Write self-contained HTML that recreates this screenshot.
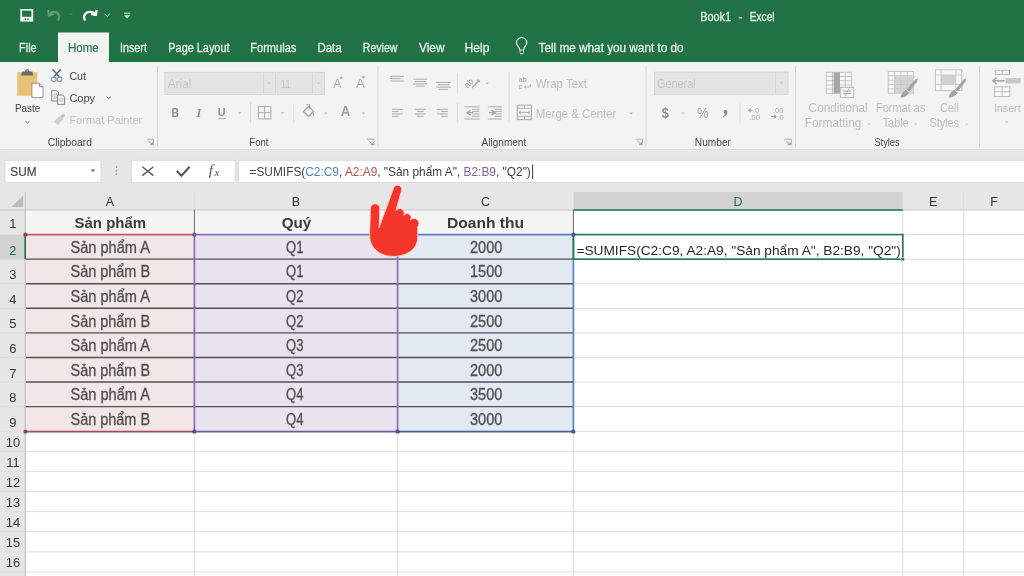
<!DOCTYPE html>
<html><head><meta charset="utf-8"><style>
html,body{margin:0;padding:0;width:1024px;height:576px;overflow:hidden;background:#fff;font-family:"Liberation Sans",sans-serif}
svg{display:block;will-change:transform}
</style></head><body>
<svg width="1024" height="576" viewBox="0 0 1024 576">
<rect x="0" y="0" width="1024" height="62" fill="#217346" />
<rect x="58" y="32.5" width="51" height="30" fill="#f3f3f3" />
<text x="700.20" y="21.10" font-size="12.79" textLength="30.81" lengthAdjust="spacingAndGlyphs" fill="#e4efe8" font-family="Liberation Sans" stroke="#e4efe8" stroke-width="0.3">Book1</text>
<rect x="738.6" y="17.3" width="3.5" height="1.1" fill="#e4efe8" />
<text x="749.80" y="21.10" font-size="12.79" textLength="24.70" lengthAdjust="spacingAndGlyphs" fill="#e4efe8" font-family="Liberation Sans" stroke="#e4efe8" stroke-width="0.3">Excel</text>
<text x="19.10" y="51.70" font-size="13.08" textLength="17.49" lengthAdjust="spacingAndGlyphs" fill="#e8f0ea" font-family="Liberation Sans" stroke="#e8f0ea" stroke-width="0.3">File</text>
<text x="119.90" y="51.70" font-size="13.08" textLength="27.01" lengthAdjust="spacingAndGlyphs" fill="#e8f0ea" font-family="Liberation Sans" stroke="#e8f0ea" stroke-width="0.3">Insert</text>
<text x="168.30" y="51.70" font-size="13.08" textLength="61.21" lengthAdjust="spacingAndGlyphs" fill="#e8f0ea" font-family="Liberation Sans" stroke="#e8f0ea" stroke-width="0.3">Page Layout</text>
<text x="250.30" y="51.70" font-size="13.08" textLength="46.00" lengthAdjust="spacingAndGlyphs" fill="#e8f0ea" font-family="Liberation Sans" stroke="#e8f0ea" stroke-width="0.3">Formulas</text>
<text x="317.40" y="51.70" font-size="13.08" textLength="24.30" lengthAdjust="spacingAndGlyphs" fill="#e8f0ea" font-family="Liberation Sans" stroke="#e8f0ea" stroke-width="0.3">Data</text>
<text x="362.80" y="51.70" font-size="13.08" textLength="34.56" lengthAdjust="spacingAndGlyphs" fill="#e8f0ea" font-family="Liberation Sans" stroke="#e8f0ea" stroke-width="0.3">Review</text>
<text x="419.00" y="51.70" font-size="13.08" textLength="25.46" lengthAdjust="spacingAndGlyphs" fill="#e8f0ea" font-family="Liberation Sans" stroke="#e8f0ea" stroke-width="0.3">View</text>
<text x="464.50" y="51.70" font-size="13.08" textLength="24.89" lengthAdjust="spacingAndGlyphs" fill="#e8f0ea" font-family="Liberation Sans" stroke="#e8f0ea" stroke-width="0.3">Help</text>
<text x="538.60" y="51.70" font-size="13.08" textLength="145.00" lengthAdjust="spacingAndGlyphs" fill="#e8f0ea" font-family="Liberation Sans" stroke="#e8f0ea" stroke-width="0.3">Tell me what you want to do</text>
<text x="68.00" y="51.70" font-size="13.08" textLength="30.70" lengthAdjust="spacingAndGlyphs" fill="#217346" font-family="Liberation Sans" stroke="#217346" stroke-width="0.2">Home</text>
<rect x="0" y="62" width="1024" height="87.5" fill="#f3f3f3" />
<rect x="0" y="149" width="1024" height="1.2" fill="#dadada" />
<rect x="0" y="150.2" width="1024" height="42" fill="#e6e6e6" />
<line x1="157.5" y1="66" x2="157.5" y2="147" stroke="#d4d4d4" stroke-width="1" />
<line x1="378" y1="66" x2="378" y2="147" stroke="#d4d4d4" stroke-width="1" />
<line x1="646" y1="66" x2="646" y2="147" stroke="#d4d4d4" stroke-width="1" />
<line x1="795.5" y1="66" x2="795.5" y2="147" stroke="#d4d4d4" stroke-width="1" />
<line x1="979.5" y1="66" x2="979.5" y2="147" stroke="#d4d4d4" stroke-width="1" />
<text x="47.70" y="145.50" font-size="11.05" textLength="44.30" lengthAdjust="spacingAndGlyphs" fill="#444444" font-family="Liberation Sans" >Clipboard</text>
<text x="249.30" y="145.50" font-size="11.05" textLength="19.11" lengthAdjust="spacingAndGlyphs" fill="#444444" font-family="Liberation Sans" >Font</text>
<text x="481.60" y="145.50" font-size="11.05" textLength="44.59" lengthAdjust="spacingAndGlyphs" fill="#444444" font-family="Liberation Sans" >Alignment</text>
<text x="694.80" y="145.50" font-size="11.05" textLength="36.19" lengthAdjust="spacingAndGlyphs" fill="#444444" font-family="Liberation Sans" >Number</text>
<text x="874.40" y="145.50" font-size="11.05" textLength="25.21" lengthAdjust="spacingAndGlyphs" fill="#444444" font-family="Liberation Sans" >Styles</text>
<rect x="17.2" y="72.3" width="20" height="23.4" fill="#e9c176" />
<path d="M21 75.5 L22 71.5 L25 71.5 A2.2 2.2 0 0 1 29.4 71.5 L32.3 71.5 L33.3 75.5 Z" fill="#6b6b6b" stroke="none" stroke-width="1" />
<rect x="26.6" y="70.3" width="1.2" height="1.2" fill="#e9c176" />
<path d="M31.9 83.2 L39.5 83.2 L43 86.7 L43 97.6 L31.9 97.6 Z" fill="#ffffff" stroke="#8a8a8a" stroke-width="0.9" />
<path d="M39.5 83.2 L39.5 86.7 L43 86.7" fill="#d0d0d0" stroke="#8a8a8a" stroke-width="0.9" />
<text x="15.00" y="111.80" font-size="10.76" textLength="25.20" lengthAdjust="spacingAndGlyphs" fill="#444444" font-family="Liberation Sans" >Paste</text>
<path d="M25.6 121.3 L27.5 123 L29.4 121.3" fill="none" stroke="#666" stroke-width="1" />
<path d="M52.5 69.3 L60 77.5 M60.8 69.3 L53.3 77.5" fill="none" stroke="#606060" stroke-width="1.3" />
<circle cx="53.8" cy="79.3" r="2.3" fill="none" stroke="#8aa2ba" stroke-width="1.3"/>
<circle cx="59.6" cy="79.3" r="2.3" fill="none" stroke="#8aa2ba" stroke-width="1.3"/>
<text x="69.40" y="80.00" font-size="11.48" textLength="16.51" lengthAdjust="spacingAndGlyphs" fill="#444444" font-family="Liberation Sans" >Cut</text>
<path d="M51.6 90.6 L56.5 90.6 L58.5 92.6 L58.5 101 L51.6 101 Z" fill="#f7f7f7" stroke="#777" stroke-width="0.9" />
<path d="M53 94 L57 94 M53 96 L57 96 M53 98 L57 98" fill="none" stroke="#999" stroke-width="0.7" />
<path d="M57.5 95 L62.5 95 L64.6 97.1 L64.6 104.3 L57.5 104.3 Z" fill="#f7f7f7" stroke="#777" stroke-width="0.9" />
<path d="M58.8 99 L63.3 99 M58.8 101 L63.3 101" fill="none" stroke="#8aa2ba" stroke-width="0.8" />
<text x="69.40" y="101.60" font-size="11.48" textLength="25.69" lengthAdjust="spacingAndGlyphs" fill="#444444" font-family="Liberation Sans" >Copy</text>
<path d="M106.8 96.8 L108.8 98.6 L110.8 96.8" fill="none" stroke="#666" stroke-width="0.9" />
<path d="M54 121.5 L60 115.5 L63.5 119 L57.5 125 Z" fill="#cfcfcf" stroke="none" stroke-width="1" />
<path d="M60.5 116 L63.5 113.8 L65 115.3 L62.8 118.3 Z" fill="#bdbdbd" stroke="none" stroke-width="1" />
<text x="69.40" y="124.20" font-size="11.48" textLength="72.91" lengthAdjust="spacingAndGlyphs" fill="#c2c2c2" font-family="Liberation Sans" >Format Painter</text>
<path d="M146.5 139.2 L153.5 139.2 L153.5 145.2" fill="none" stroke="#a0a0a0" stroke-width="0.8" />
<path d="M148.5 141.2 L152.5 144.7 M152.5 142.2 L152.5 144.7 L150.0 144.7" fill="none" stroke="#8a8a8a" stroke-width="0.8" />
<path d="M367 139.2 L374 139.2 L374 145.2" fill="none" stroke="#a0a0a0" stroke-width="0.8" />
<path d="M369 141.2 L373 144.7 M373 142.2 L373 144.7 L370.5 144.7" fill="none" stroke="#8a8a8a" stroke-width="0.8" />
<path d="M635.5 139.2 L642.5 139.2 L642.5 145.2" fill="none" stroke="#a0a0a0" stroke-width="0.8" />
<path d="M637.5 141.2 L641.5 144.7 M641.5 142.2 L641.5 144.7 L639.0 144.7" fill="none" stroke="#8a8a8a" stroke-width="0.8" />
<path d="M784.3 139.2 L791.3 139.2 L791.3 145.2" fill="none" stroke="#a0a0a0" stroke-width="0.8" />
<path d="M786.3 141.2 L790.3 144.7 M790.3 142.2 L790.3 144.7 L787.8 144.7" fill="none" stroke="#8a8a8a" stroke-width="0.8" />
<rect x="164.9" y="72.3" width="110.5" height="22.2" fill="#e4e4e4" stroke="#d2d2d2" stroke-width="0.8"/>
<line x1="263.5" y1="72.5" x2="263.5" y2="94.3" stroke="#d2d2d2" stroke-width="0.8" />
<rect x="276.9" y="72.3" width="47.7" height="22.2" fill="#e4e4e4" stroke="#d2d2d2" stroke-width="0.8"/>
<line x1="312.5" y1="72.5" x2="312.5" y2="94.3" stroke="#d2d2d2" stroke-width="0.8" />
<path d="M267.8 82.8 L269.8 82.8 L268.8 84 Z" fill="#aaa" stroke="none" stroke-width="1" />
<path d="M317.3 82.8 L319.3 82.8 L318.3 84 Z" fill="#aaa" stroke="none" stroke-width="1" />
<text x="167.80" y="87.60" font-size="12.06" textLength="23.51" lengthAdjust="spacingAndGlyphs" fill="#c4c4c4" font-family="Liberation Sans" >Arial</text>
<text x="280.50" y="87.70" font-size="11.63" textLength="10.41" lengthAdjust="spacingAndGlyphs" fill="#c4c4c4" font-family="Liberation Sans" >11</text>
<text x="333.20" y="87.70" font-size="12.35" textLength="8.19" lengthAdjust="spacingAndGlyphs" fill="#a9a9a9" font-family="Liberation Sans" >A</text>
<path d="M339.2 78.4 L343.4 78.4 L341.3 76.2 Z" fill="#a0a0a0" stroke="none" stroke-width="1" />
<text x="356.00" y="87.70" font-size="12.35" textLength="8.89" lengthAdjust="spacingAndGlyphs" fill="#a9a9a9" font-family="Liberation Sans" >A</text>
<path d="M361.2 76.2 L365.4 76.2 L363.3 78.4 Z" fill="#a0a0a0" stroke="none" stroke-width="1" />
<text x="171.50" y="117.00" font-size="12.21" textLength="7.50" lengthAdjust="spacingAndGlyphs" fill="#8e8e8e" font-family="Liberation Sans" font-weight="bold" >B</text>
<text x="196.5" y="117" font-size="12.4" font-weight="bold" font-style="italic" fill="#8e8e8e" font-family="Liberation Serif">I</text>
<text x="217.80" y="116.40" font-size="11.63" textLength="7.80" lengthAdjust="spacingAndGlyphs" fill="#8e8e8e" font-family="Liberation Sans" font-weight="bold" >U</text>
<line x1="217.8" y1="118.6" x2="225.6" y2="118.6" stroke="#a8a8a8" stroke-width="0.9" />
<path d="M237.70000000000002 112.2 L241.3 112.2 L239.5 114.2 Z" fill="#b5b5b5" stroke="none" stroke-width="1" />
<line x1="250.6" y1="102" x2="250.6" y2="123" stroke="#d8d8d8" stroke-width="0.9" />
<rect x="258.4" y="106.5" width="12.4" height="12.4" fill="none" stroke="#b0b0b0" stroke-width="1.1"/>
<line x1="264.6" y1="106.5" x2="264.6" y2="118.9" stroke="#b0b0b0" stroke-width="1.1" />
<line x1="258.4" y1="112.7" x2="270.8" y2="112.7" stroke="#b0b0b0" stroke-width="1.1" />
<path d="M280.9 112.2 L284.5 112.2 L282.7 114.2 Z" fill="#b5b5b5" stroke="none" stroke-width="1" />
<line x1="293.8" y1="104" x2="293.8" y2="123" stroke="#d8d8d8" stroke-width="0.9" />
<path d="M303.5 111.5 L308.5 106.5 L313.5 111.5 L308.5 116.5 Z" fill="none" stroke="#a5a5a5" stroke-width="1.3" />
<path d="M306.5 104.8 L309.5 104.8 L309.5 108.5" fill="none" stroke="#a5a5a5" stroke-width="1.1" />
<path d="M313 112 Q315 114.5 314 116 Q312.5 115 313 112 Z" fill="#a5a5a5" stroke="none" stroke-width="1" />
<path d="M324.09999999999997 112.4 L327.7 112.4 L325.9 114.4 Z" fill="#b5b5b5" stroke="none" stroke-width="1" />
<text x="340.80" y="116.20" font-size="15.41" textLength="9.50" lengthAdjust="spacingAndGlyphs" fill="#a0a0a0" font-family="Liberation Sans" font-weight="bold" >A</text>
<path d="M361.7 112.4 L365.3 112.4 L363.5 114.4 Z" fill="#b5b5b5" stroke="none" stroke-width="1" />
<line x1="390.4" y1="76.3" x2="404.0" y2="76.3" stroke="#acacac" stroke-width="1.0" />
<line x1="390.4" y1="78.6" x2="400.4" y2="78.6" stroke="#acacac" stroke-width="1.0" />
<line x1="390.4" y1="81" x2="404.0" y2="81" stroke="#acacac" stroke-width="1.0" />
<line x1="413.3" y1="79.2" x2="427.3" y2="79.2" stroke="#acacac" stroke-width="1.0" />
<line x1="414.8" y1="81.6" x2="425.8" y2="81.6" stroke="#acacac" stroke-width="1.0" />
<line x1="413.3" y1="83.9" x2="427.3" y2="83.9" stroke="#acacac" stroke-width="1.0" />
<line x1="415.8" y1="86.2" x2="424.8" y2="86.2" stroke="#acacac" stroke-width="1.0" />
<line x1="436.2" y1="82.4" x2="450.8" y2="82.4" stroke="#acacac" stroke-width="1.0" />
<line x1="438.0" y1="84.7" x2="449.0" y2="84.7" stroke="#acacac" stroke-width="1.0" />
<line x1="436.2" y1="87.1" x2="450.8" y2="87.1" stroke="#acacac" stroke-width="1.0" />
<line x1="439.0" y1="89.4" x2="448.0" y2="89.4" stroke="#acacac" stroke-width="1.0" />
<line x1="457.4" y1="73" x2="457.4" y2="93" stroke="#d8d8d8" stroke-width="0.9" />
<text x="0" y="0" font-size="8.5" fill="#a0a0a0" font-family="Liberation Sans" transform="translate(467.5 88.5) rotate(-45)">ab</text>
<line x1="472" y1="88" x2="479" y2="80.5" stroke="#a0a0a0" stroke-width="1.1" />
<path d="M477 80.2 L479.2 80.2 L479.2 82.4" fill="none" stroke="#a0a0a0" stroke-width="1" />
<path d="M485.2 82.6 L488.8 82.6 L487.0 84.6 Z" fill="#b5b5b5" stroke="none" stroke-width="1" />
<line x1="392" y1="109.3" x2="402.8" y2="109.3" stroke="#acacac" stroke-width="1.0" />
<line x1="392" y1="111.6" x2="398.5" y2="111.6" stroke="#acacac" stroke-width="1.0" />
<line x1="392" y1="113.9" x2="402.8" y2="113.9" stroke="#acacac" stroke-width="1.0" />
<line x1="392" y1="116.3" x2="398.5" y2="116.3" stroke="#acacac" stroke-width="1.0" />
<line x1="414.8" y1="109.3" x2="425.8" y2="109.3" stroke="#acacac" stroke-width="1.0" />
<line x1="417.05" y1="111.6" x2="423.55" y2="111.6" stroke="#acacac" stroke-width="1.0" />
<line x1="414.8" y1="113.9" x2="425.8" y2="113.9" stroke="#acacac" stroke-width="1.0" />
<line x1="417.05" y1="116.3" x2="423.55" y2="116.3" stroke="#acacac" stroke-width="1.0" />
<line x1="436.8" y1="109.3" x2="447.8" y2="109.3" stroke="#acacac" stroke-width="1.0" />
<line x1="441.3" y1="111.6" x2="447.8" y2="111.6" stroke="#acacac" stroke-width="1.0" />
<line x1="436.8" y1="113.9" x2="447.8" y2="113.9" stroke="#acacac" stroke-width="1.0" />
<line x1="441.3" y1="116.3" x2="447.8" y2="116.3" stroke="#acacac" stroke-width="1.0" />
<line x1="457.4" y1="103" x2="457.4" y2="123" stroke="#d8d8d8" stroke-width="0.9" />
<line x1="464.5" y1="106.8" x2="479.5" y2="106.8" stroke="#acacac" stroke-width="1.0" />
<line x1="464.5" y1="119" x2="479.5" y2="119" stroke="#acacac" stroke-width="1.0" />
<line x1="472.0" y1="109.3" x2="479.5" y2="109.3" stroke="#acacac" stroke-width="1.0" />
<line x1="472.0" y1="111.6" x2="479.5" y2="111.6" stroke="#acacac" stroke-width="1.0" />
<line x1="472.0" y1="113.9" x2="479.5" y2="113.9" stroke="#acacac" stroke-width="1.0" />
<line x1="472.0" y1="116.3" x2="479.5" y2="116.3" stroke="#acacac" stroke-width="1.0" />
<path d="M470.5 110.3 L467 112.7 L470.5 115.1" fill="none" stroke="#a0a0a0" stroke-width="1.3" />
<line x1="467" y1="112.7" x2="473" y2="112.7" stroke="#a0a0a0" stroke-width="1.2" />
<line x1="487.8" y1="106.8" x2="501.8" y2="106.8" stroke="#acacac" stroke-width="1.0" />
<line x1="487.8" y1="119" x2="501.8" y2="119" stroke="#acacac" stroke-width="1.0" />
<line x1="494.8" y1="109.3" x2="501.8" y2="109.3" stroke="#acacac" stroke-width="1.0" />
<line x1="494.8" y1="111.6" x2="501.8" y2="111.6" stroke="#acacac" stroke-width="1.0" />
<line x1="494.8" y1="113.9" x2="501.8" y2="113.9" stroke="#acacac" stroke-width="1.0" />
<line x1="494.8" y1="116.3" x2="501.8" y2="116.3" stroke="#acacac" stroke-width="1.0" />
<path d="M491.5 110.3 L495 112.7 L491.5 115.1" fill="none" stroke="#a0a0a0" stroke-width="1.3" />
<line x1="489" y1="112.7" x2="495" y2="112.7" stroke="#a0a0a0" stroke-width="1.2" />
<line x1="509" y1="72" x2="509" y2="123" stroke="#d8d8d8" stroke-width="0.9" />
<text x="518.8" y="82.4" font-size="7" fill="#a0a0a0" font-family="Liberation Sans">ab</text>
<text x="518.8" y="88.6" font-size="7" fill="#a0a0a0" font-family="Liberation Sans">c</text>
<path d="M530.3 84 L530.3 87 L524.5 87 M526 85.6 L524.5 87 L526 88.4" fill="none" stroke="#a8a8a8" stroke-width="0.8" />
<text x="535.75" y="88.00" font-size="12.50" textLength="51.25" lengthAdjust="spacingAndGlyphs" fill="#bdbdbd" font-family="Liberation Sans" >Wrap Text</text>
<rect x="517.3" y="105.2" width="14.2" height="14.4" fill="none" stroke="#a8a8a8" stroke-width="1"/>
<line x1="517.3" y1="108.4" x2="531.5" y2="108.4" stroke="#a8a8a8" stroke-width="0.8" />
<line x1="517.3" y1="116.4" x2="531.5" y2="116.4" stroke="#a8a8a8" stroke-width="0.8" />
<line x1="524.4" y1="105.2" x2="524.4" y2="108.4" stroke="#a8a8a8" stroke-width="0.8" />
<line x1="524.4" y1="116.4" x2="524.4" y2="119.6" stroke="#a8a8a8" stroke-width="0.8" />
<path d="M519 112.4 L530 112.4 M520.8 110.9 L519 112.4 L520.8 113.9 M528.2 110.9 L530 112.4 L528.2 113.9" fill="none" stroke="#a0a0a0" stroke-width="0.8" />
<text x="535.75" y="118.00" font-size="12.50" textLength="80.64" lengthAdjust="spacingAndGlyphs" fill="#bdbdbd" font-family="Liberation Sans" >Merge &amp; Center</text>
<path d="M629.3 112.6 L632.9 112.6 L631.1 114.6 Z" fill="#b5b5b5" stroke="none" stroke-width="1" />
<rect x="654.4" y="72.2" width="133.6" height="22.4" fill="#e4e4e4" stroke="#d2d2d2" stroke-width="0.8"/>
<line x1="775.5" y1="72.4" x2="775.5" y2="94.4" stroke="#d2d2d2" stroke-width="0.8" />
<path d="M780.5 82.4 L782.5 82.4 L781.5 83.6 Z" fill="#aaa" stroke="none" stroke-width="1" />
<text x="657.00" y="87.80" font-size="12.79" textLength="38.70" lengthAdjust="spacingAndGlyphs" fill="#c6c6c6" font-family="Liberation Sans" >General</text>
<text x="661.70" y="117.60" font-size="14.54" textLength="7.06" lengthAdjust="spacingAndGlyphs" fill="#8e8e8e" font-family="Liberation Sans" font-weight="bold" >$</text>
<path d="M681.1999999999999 112.6 L684.8 112.6 L683.0 114.6 Z" fill="#c0c0c0" stroke="none" stroke-width="1" />
<text x="696.90" y="117.80" font-size="14.97" textLength="11.69" lengthAdjust="spacingAndGlyphs" fill="#a6a6a6" font-family="Liberation Sans" >%</text>
<path d="M724.8 109.8 A2.3 2.3 0 0 1 727.4 112.6 Q727 115.6 723.2 117.4 L722.9 116.5 Q725 115.2 725 113.9 A2.2 2.2 0 0 1 724.8 109.8 Z" fill="#8e8e8e" stroke="none" stroke-width="1" />
<line x1="740" y1="103.5" x2="740" y2="123.5" stroke="#d8d8d8" stroke-width="0.9" />
<text x="753" y="113" font-size="7.6" fill="#a8a8a8" font-family="Liberation Sans">.0</text>
<text x="749.5" y="119.6" font-size="7.6" fill="#a8a8a8" font-family="Liberation Sans">.00</text>
<path d="M752.5 110.3 L749 110.3 M750.6 108.6 L748.8 110.3 L750.6 112" fill="none" stroke="#a0a0a0" stroke-width="1.1" />
<text x="773" y="112.6" font-size="7.6" fill="#a8a8a8" font-family="Liberation Sans">.00</text>
<text x="777.5" y="119.6" font-size="7.6" fill="#a8a8a8" font-family="Liberation Sans">.0</text>
<path d="M771 116.5 L776 116.5 M774.3 114.8 L776.1 116.5 L774.3 118.2" fill="none" stroke="#a0a0a0" stroke-width="1.1" />
<rect x="826.2" y="72.3" width="25.4" height="21" fill="#f7f7f7" stroke="#bdbdbd" stroke-width="0.9"/>
<line x1="832.5500000000001" y1="72.3" x2="832.5500000000001" y2="93.3" stroke="#bdbdbd" stroke-width="0.8" />
<line x1="838.9000000000001" y1="72.3" x2="838.9000000000001" y2="93.3" stroke="#bdbdbd" stroke-width="0.8" />
<line x1="845.25" y1="72.3" x2="845.25" y2="93.3" stroke="#bdbdbd" stroke-width="0.8" />
<line x1="826.2" y1="76.5" x2="851.6" y2="76.5" stroke="#bdbdbd" stroke-width="0.8" />
<line x1="826.2" y1="80.7" x2="851.6" y2="80.7" stroke="#bdbdbd" stroke-width="0.8" />
<line x1="826.2" y1="84.89999999999999" x2="851.6" y2="84.89999999999999" stroke="#bdbdbd" stroke-width="0.8" />
<line x1="826.2" y1="89.1" x2="851.6" y2="89.1" stroke="#bdbdbd" stroke-width="0.8" />
<rect x="833.6" y="72.3" width="6.4" height="21" fill="#a8a8a8" />
<rect x="840.3" y="87.3" width="13.4" height="10.2" fill="#f7f7f7" stroke="#b0b0b0" stroke-width="0.9"/>
<path d="M843 91 L851 91 M843 93.6 L851 93.6 M849 88.5 L845 96" fill="none" stroke="#9a9a9a" stroke-width="0.8" />
<rect x="888.2" y="71.4" width="25.4" height="21.8" fill="#f7f7f7" stroke="#bdbdbd" stroke-width="0.9"/>
<line x1="894.5500000000001" y1="71.4" x2="894.5500000000001" y2="93.2" stroke="#bdbdbd" stroke-width="0.8" />
<line x1="900.9000000000001" y1="71.4" x2="900.9000000000001" y2="93.2" stroke="#bdbdbd" stroke-width="0.8" />
<line x1="907.25" y1="71.4" x2="907.25" y2="93.2" stroke="#bdbdbd" stroke-width="0.8" />
<line x1="888.2" y1="75.76" x2="913.6" y2="75.76" stroke="#bdbdbd" stroke-width="0.8" />
<line x1="888.2" y1="80.12" x2="913.6" y2="80.12" stroke="#bdbdbd" stroke-width="0.8" />
<line x1="888.2" y1="84.48" x2="913.6" y2="84.48" stroke="#bdbdbd" stroke-width="0.8" />
<line x1="888.2" y1="88.84" x2="913.6" y2="88.84" stroke="#bdbdbd" stroke-width="0.8" />
<rect x="894.6" y="75.8" width="18.9" height="17.4" fill="#d6d6d6" />
<line x1="894.5500000000001" y1="75.8" x2="894.5500000000001" y2="93.2" stroke="#c4c4c4" stroke-width="0.7" />
<line x1="900.9000000000001" y1="75.8" x2="900.9000000000001" y2="93.2" stroke="#c4c4c4" stroke-width="0.7" />
<line x1="907.25" y1="75.8" x2="907.25" y2="93.2" stroke="#c4c4c4" stroke-width="0.7" />
<line x1="894.6" y1="80.12" x2="913.6" y2="80.12" stroke="#c4c4c4" stroke-width="0.7" />
<line x1="894.6" y1="84.48" x2="913.6" y2="84.48" stroke="#c4c4c4" stroke-width="0.7" />
<line x1="894.6" y1="88.84" x2="913.6" y2="88.84" stroke="#c4c4c4" stroke-width="0.7" />
<path d="M917.6 78.2 L915.2 79.4 L906.6 89.7 L909.3000000000001 91.8 L917.2 81.4 Z" fill="#a4a4a4" stroke="none" stroke-width="1" />
<path d="M905.8000000000001 89.4 L909.6 92.60000000000001 Q907.1 97.5 900.1 98.0 Q900.6 92.2 905.8000000000001 89.4 Z" fill="#a4a4a4" stroke="#f3f3f3" stroke-width="0.6" />
<rect x="935.4" y="69.8" width="26.4" height="20.8" fill="#f7f7f7" stroke="#bdbdbd" stroke-width="0.9"/>
<line x1="941" y1="69.8" x2="941" y2="90.6" stroke="#c4c4c4" stroke-width="0.8" />
<line x1="955.8" y1="69.8" x2="955.8" y2="90.6" stroke="#c4c4c4" stroke-width="0.8" />
<line x1="935.4" y1="75" x2="961.8" y2="75" stroke="#c4c4c4" stroke-width="0.8" />
<line x1="935.4" y1="84.4" x2="961.8" y2="84.4" stroke="#c4c4c4" stroke-width="0.8" />
<rect x="941" y="75" width="14.8" height="9.4" fill="#d0d0d0" />
<path d="M966 78.2 L963.6 79.4 L955 89.7 L957.7 91.8 L965.6 81.4 Z" fill="#a4a4a4" stroke="none" stroke-width="1" />
<path d="M954.2 89.4 L958 92.60000000000001 Q955.5 97.5 948.5 98.0 Q949 92.2 954.2 89.4 Z" fill="#a4a4a4" stroke="#f3f3f3" stroke-width="0.6" />
<text x="808.60" y="112.00" font-size="12.50" textLength="59.11" lengthAdjust="spacingAndGlyphs" fill="#bdbdbd" font-family="Liberation Sans" >Conditional</text>
<text x="804.80" y="127.40" font-size="12.50" textLength="56.59" lengthAdjust="spacingAndGlyphs" fill="#bdbdbd" font-family="Liberation Sans" >Formatting</text>
<path d="M867.0 123.6 L870.6 123.6 L868.8000000000001 125.6 Z" fill="#c8c8c8" stroke="none" stroke-width="1" />
<text x="876.00" y="112.00" font-size="12.50" textLength="49.41" lengthAdjust="spacingAndGlyphs" fill="#bdbdbd" font-family="Liberation Sans" >Format as</text>
<text x="882.70" y="127.40" font-size="12.50" textLength="25.91" lengthAdjust="spacingAndGlyphs" fill="#bdbdbd" font-family="Liberation Sans" >Table</text>
<path d="M914.0 123.6 L917.6 123.6 L915.8000000000001 125.6 Z" fill="#c8c8c8" stroke="none" stroke-width="1" />
<text x="940.00" y="112.00" font-size="12.50" textLength="19.00" lengthAdjust="spacingAndGlyphs" fill="#bdbdbd" font-family="Liberation Sans" >Cell</text>
<text x="929.40" y="127.40" font-size="12.50" textLength="29.61" lengthAdjust="spacingAndGlyphs" fill="#bdbdbd" font-family="Liberation Sans" >Styles</text>
<path d="M965.0 123.6 L968.6 123.6 L966.8000000000001 125.6 Z" fill="#c8c8c8" stroke="none" stroke-width="1" />
<rect x="995.2" y="70.4" width="14.3" height="4" fill="none" stroke="#b5b5b5" stroke-width="0.9"/>
<line x1="1002.3" y1="70.4" x2="1002.3" y2="74.4" stroke="#b5b5b5" stroke-width="0.8" />
<rect x="1005.6" y="78.2" width="15" height="5.2" fill="#c6c6c6" />
<line x1="992.8" y1="80.8" x2="1004.5" y2="80.8" stroke="#a8a8a8" stroke-width="1.6" />
<path d="M996.5 77.5 L993 80.8 L996.5 84.1" fill="none" stroke="#a8a8a8" stroke-width="1.6" />
<rect x="994.6" y="86.8" width="15.2" height="9.8" fill="#f7f7f7" stroke="#b5b5b5" stroke-width="0.9"/>
<line x1="1002.2" y1="86.8" x2="1002.2" y2="96.6" stroke="#b5b5b5" stroke-width="0.8" />
<line x1="994.6" y1="91.7" x2="1009.8000000000001" y2="91.7" stroke="#b5b5b5" stroke-width="0.8" />
<text x="993.90" y="112.10" font-size="11.48" textLength="26.71" lengthAdjust="spacingAndGlyphs" fill="#bdbdbd" font-family="Liberation Sans" >Insert</text>
<path d="M1004.8 121.4 L1008.4 121.4 L1006.6 123.4 Z" fill="#c8c8c8" stroke="none" stroke-width="1" />
<rect x="20.3" y="9" width="12.9" height="12.6" fill="#f4f8f5" />
<rect x="22.1" y="10.6" width="9.3" height="6.2" fill="#217346" />
<rect x="24.6" y="18.6" width="1.4" height="1.4" fill="#217346" />
<rect x="27.2" y="18.6" width="1.4" height="1.4" fill="#217346" />
<rect x="23.8" y="18" width="5.6" height="0.5" fill="#9cc4ab" />
<path d="M49.5 14 Q53 10.5 57 12.8 Q60.8 15.5 58 20.8" fill="none" stroke="#5f9b78" stroke-width="2.3" />
<path d="M48 10 L48.8 15.5 L53.8 14" fill="none" stroke="#5f9b78" stroke-width="2" stroke-linejoin="round"/>
<path d="M85 20.5 Q82.5 15.5 86.5 12.8 Q90.5 10.5 95.5 13.6" fill="none" stroke="#ffffff" stroke-width="2.2" />
<path d="M96.5 9.8 L96 15 L91.2 14.2" fill="none" stroke="#ffffff" stroke-width="2.2" stroke-linejoin="round"/>
<path d="M104.6 13.8 L107.2 16.4 L109.8 13.8" fill="none" stroke="#cfe3d6" stroke-width="1" />
<path d="M69.5 13.3 L71 14.6 L72.5 13.3" fill="none" stroke="#4f8f69" stroke-width="0.9" />
<line x1="124" y1="13.2" x2="130.3" y2="13.2" stroke="#e0ece5" stroke-width="1" />
<path d="M124 15.2 L130.3 15.2 L127.15 18.6 Z" fill="#e0ece5" stroke="none" stroke-width="1" />
<path d="M520 50.5 L520 52.5 M523.5 50.5 L523.5 52.5 M520 53.8 L523.5 53.8" fill="none" stroke="#e8f0ea" stroke-width="1" />
<path d="M519.8 50 Q519.5 47.5 517.5 45.5 A5 5 0 1 1 525.7 45.5 Q523.8 47.5 523.5 50 Z" fill="none" stroke="#e8f0ea" stroke-width="1.2" />
<rect x="5" y="160.3" width="96" height="22" fill="#ffffff" stroke="#d6d6d6" stroke-width="0.8"/>
<text x="10.30" y="175.80" font-size="12.35" textLength="26.20" lengthAdjust="spacingAndGlyphs" fill="#4a4a4a" font-family="Liberation Sans" stroke="#4a4a4a" stroke-width="0.2">SUM</text>
<rect x="131.2" y="160.3" width="104" height="22" fill="#ffffff" stroke="#d6d6d6" stroke-width="0.8"/>
<rect x="238.6" y="160.3" width="790" height="22" fill="#ffffff" stroke="#d6d6d6" stroke-width="0.8"/>
<path d="M90.8 169.6 L95.2 169.6 L93 172 Z" fill="#555" stroke="none" stroke-width="1" />
<circle cx="116.4" cy="167" r="0.9" fill="#9a9a9a"/>
<circle cx="116.4" cy="170.6" r="0.9" fill="#9a9a9a"/>
<circle cx="116.4" cy="174.2" r="0.9" fill="#9a9a9a"/>
<path d="M142.3 166.8 L153.5 175.6 M153.5 166.8 L142.3 175.6" fill="none" stroke="#5a5a5a" stroke-width="1.4" />
<path d="M176.8 171 L181.5 175.8 L189.6 166.8" fill="none" stroke="#555" stroke-width="2.1" />
<text x="208.8" y="175.4" font-size="15" font-style="italic" fill="#555" font-family="Liberation Serif">f</text>
<text x="214.6" y="175.6" font-size="11" font-style="italic" fill="#555" font-family="Liberation Serif">x</text>
<text x="249.50" y="176.2" font-size="13.37" textLength="281.31" lengthAdjust="spacingAndGlyphs" font-family="Liberation Sans"><tspan fill="#404040">=SUMIFS(</tspan><tspan fill="#4f81bd">C2:C9</tspan><tspan fill="#404040">, </tspan><tspan fill="#c0504d">A2:A9</tspan><tspan fill="#404040">, &quot;Sản phẩm A&quot;, </tspan><tspan fill="#8064a2">B2:B9</tspan><tspan fill="#404040">, &quot;Q2&quot;)</tspan></text>
<line x1="532.6" y1="164.5" x2="532.6" y2="179" stroke="#222" stroke-width="0.9" />
<rect x="0" y="192" width="1024" height="18" fill="#e6e6e6" />
<rect x="0" y="210" width="25.4" height="366" fill="#e6e6e6" />
<rect x="573.4" y="192" width="329.4" height="18" fill="#d2d2d2" />
<rect x="0" y="234.57999999999998" width="25.4" height="24.579999999999984" fill="#d2d2d2" />
<rect x="25.4" y="210" width="1000" height="366" fill="#ffffff" />
<rect x="25.4" y="210" width="548.0" height="24.579999999999984" fill="#f5f5f5" />
<rect x="25.4" y="234.57999999999998" width="169.0" height="196.64" fill="#f2e6e6" />
<rect x="194.4" y="234.57999999999998" width="203.20000000000002" height="196.64" fill="#e8e4ef" />
<rect x="397.6" y="234.57999999999998" width="175.79999999999995" height="196.64" fill="#e3e9f2" />
<line x1="0" y1="234.57999999999998" x2="1024" y2="234.57999999999998" stroke="#dddddd" stroke-width="1" />
<line x1="0" y1="259.15999999999997" x2="1024" y2="259.15999999999997" stroke="#dddddd" stroke-width="1" />
<line x1="0" y1="283.74" x2="1024" y2="283.74" stroke="#dddddd" stroke-width="1" />
<line x1="0" y1="308.32" x2="1024" y2="308.32" stroke="#dddddd" stroke-width="1" />
<line x1="0" y1="332.9" x2="1024" y2="332.9" stroke="#dddddd" stroke-width="1" />
<line x1="0" y1="357.48" x2="1024" y2="357.48" stroke="#dddddd" stroke-width="1" />
<line x1="0" y1="382.06" x2="1024" y2="382.06" stroke="#dddddd" stroke-width="1" />
<line x1="0" y1="406.64" x2="1024" y2="406.64" stroke="#dddddd" stroke-width="1" />
<line x1="0" y1="431.21999999999997" x2="1024" y2="431.21999999999997" stroke="#dddddd" stroke-width="1" />
<line x1="0" y1="451.32" x2="1024" y2="451.32" stroke="#dddddd" stroke-width="1" />
<line x1="0" y1="471.42" x2="1024" y2="471.42" stroke="#dddddd" stroke-width="1" />
<line x1="0" y1="491.52000000000004" x2="1024" y2="491.52000000000004" stroke="#dddddd" stroke-width="1" />
<line x1="0" y1="511.62000000000006" x2="1024" y2="511.62000000000006" stroke="#dddddd" stroke-width="1" />
<line x1="0" y1="531.72" x2="1024" y2="531.72" stroke="#dddddd" stroke-width="1" />
<line x1="0" y1="551.82" x2="1024" y2="551.82" stroke="#dddddd" stroke-width="1" />
<line x1="0" y1="571.9200000000001" x2="1024" y2="571.9200000000001" stroke="#dddddd" stroke-width="1" />
<line x1="25.4" y1="192" x2="25.4" y2="576" stroke="#dddddd" stroke-width="1" />
<line x1="194.4" y1="192" x2="194.4" y2="576" stroke="#dddddd" stroke-width="1" />
<line x1="397.6" y1="192" x2="397.6" y2="576" stroke="#dddddd" stroke-width="1" />
<line x1="573.4" y1="192" x2="573.4" y2="576" stroke="#dddddd" stroke-width="1" />
<line x1="902.8" y1="192" x2="902.8" y2="576" stroke="#dddddd" stroke-width="1" />
<line x1="963.6" y1="192" x2="963.6" y2="576" stroke="#dddddd" stroke-width="1" />
<line x1="0" y1="210" x2="1024" y2="210" stroke="#c6c6c6" stroke-width="1" />
<line x1="25.4" y1="192" x2="25.4" y2="576" stroke="#c6c6c6" stroke-width="1" />
<line x1="194.4" y1="210" x2="194.4" y2="234.57999999999998" stroke="#6e6e6e" stroke-width="1" />
<line x1="397.6" y1="210" x2="397.6" y2="234.57999999999998" stroke="#6e6e6e" stroke-width="1" />
<line x1="573.4" y1="210" x2="573.4" y2="234.57999999999998" stroke="#6e6e6e" stroke-width="1" />
<line x1="25.4" y1="259.15999999999997" x2="573.4" y2="259.15999999999997" stroke="#525258" stroke-width="1.4" />
<line x1="25.4" y1="283.74" x2="573.4" y2="283.74" stroke="#525258" stroke-width="1.4" />
<line x1="25.4" y1="308.32" x2="573.4" y2="308.32" stroke="#525258" stroke-width="1.4" />
<line x1="25.4" y1="332.9" x2="573.4" y2="332.9" stroke="#525258" stroke-width="1.4" />
<line x1="25.4" y1="357.48" x2="573.4" y2="357.48" stroke="#525258" stroke-width="1.4" />
<line x1="25.4" y1="382.06" x2="573.4" y2="382.06" stroke="#525258" stroke-width="1.4" />
<line x1="25.4" y1="406.64" x2="573.4" y2="406.64" stroke="#525258" stroke-width="1.4" />
<line x1="25.4" y1="234.57999999999998" x2="194.4" y2="234.57999999999998" stroke="#c05a62" stroke-width="1.6" />
<line x1="194.4" y1="234.57999999999998" x2="397.6" y2="234.57999999999998" stroke="#8c74c0" stroke-width="1.6" />
<line x1="397.6" y1="234.57999999999998" x2="573.4" y2="234.57999999999998" stroke="#5a80bd" stroke-width="1.6" />
<line x1="25.4" y1="431.61999999999995" x2="194.4" y2="431.61999999999995" stroke="#a04c52" stroke-width="1.7" />
<line x1="194.4" y1="431.61999999999995" x2="397.6" y2="431.61999999999995" stroke="#6f5c98" stroke-width="1.7" />
<line x1="397.6" y1="431.61999999999995" x2="573.4" y2="431.61999999999995" stroke="#46629c" stroke-width="1.7" />
<line x1="573.4" y1="234.57999999999998" x2="573.4" y2="431.21999999999997" stroke="#5a82c2" stroke-width="1.7" />
<line x1="194.4" y1="234.57999999999998" x2="194.4" y2="431.21999999999997" stroke="#8a70c2" stroke-width="1.8" />
<line x1="397.6" y1="234.57999999999998" x2="397.6" y2="431.21999999999997" stroke="#8c76c0" stroke-width="1.8" />
<line x1="25.4" y1="210" x2="25.4" y2="576" stroke="#c6c6c6" stroke-width="1.2" />
<line x1="573.4" y1="210" x2="902.8" y2="210" stroke="#217346" stroke-width="1.5" />
<line x1="25.2" y1="234.57999999999998" x2="25.2" y2="259.15999999999997" stroke="#217346" stroke-width="1.6" />
<rect x="573.4" y="234.57999999999998" width="329.4" height="24.579999999999984" fill="none" stroke="#2f7a4e" stroke-width="1.7"/>
<rect x="23.599999999999998" y="232.77999999999997" width="3.6" height="3.6" fill="#80484b" />
<rect x="192.6" y="232.77999999999997" width="3.6" height="3.6" fill="#6a5a90" />
<rect x="192.6" y="429.81999999999994" width="3.6" height="3.6" fill="#5f4f85" />
<rect x="395.8" y="429.81999999999994" width="3.6" height="3.6" fill="#5f4f85" />
<rect x="23.599999999999998" y="429.81999999999994" width="3.6" height="3.6" fill="#80484b" />
<rect x="571.6" y="232.77999999999997" width="3.6" height="3.6" fill="#435e90" />
<rect x="571.6" y="429.81999999999994" width="3.6" height="3.6" fill="#3f5a8a" />
<rect x="395.8" y="232.77999999999997" width="3.6" height="3.6" fill="#5b5a90" />
<rect x="901.0" y="257.35999999999996" width="3.6" height="3.6" fill="#2f7a4e" stroke="#fff" stroke-width="0.6"/>
<text x="109.9" y="205.5" font-size="12.5" text-anchor="middle" fill="#333333" font-family="Liberation Sans">A</text>
<text x="296.0" y="205.5" font-size="12.5" text-anchor="middle" fill="#333333" font-family="Liberation Sans">B</text>
<text x="485.5" y="205.5" font-size="12.5" text-anchor="middle" fill="#333333" font-family="Liberation Sans">C</text>
<text x="738.0999999999999" y="205.5" font-size="12.5" text-anchor="middle" fill="#217346" font-family="Liberation Sans">D</text>
<text x="933.2" y="205.5" font-size="12.5" text-anchor="middle" fill="#333333" font-family="Liberation Sans">E</text>
<text x="994" y="205.5" font-size="12.5" text-anchor="middle" fill="#333333" font-family="Liberation Sans">F</text>
<text x="12.9" y="228.00" font-size="12.9" text-anchor="middle" fill="#333333" font-family="Liberation Sans">1</text>
<text x="12.9" y="254.66" font-size="12.9" text-anchor="middle" fill="#217346" font-family="Liberation Sans">2</text>
<text x="12.9" y="279.24" font-size="12.9" text-anchor="middle" fill="#333333" font-family="Liberation Sans">3</text>
<text x="12.9" y="303.82" font-size="12.9" text-anchor="middle" fill="#333333" font-family="Liberation Sans">4</text>
<text x="12.9" y="328.40" font-size="12.9" text-anchor="middle" fill="#333333" font-family="Liberation Sans">5</text>
<text x="12.9" y="352.98" font-size="12.9" text-anchor="middle" fill="#333333" font-family="Liberation Sans">6</text>
<text x="12.9" y="377.56" font-size="12.9" text-anchor="middle" fill="#333333" font-family="Liberation Sans">7</text>
<text x="12.9" y="402.14" font-size="12.9" text-anchor="middle" fill="#333333" font-family="Liberation Sans">8</text>
<text x="12.9" y="426.72" font-size="12.9" text-anchor="middle" fill="#333333" font-family="Liberation Sans">9</text>
<text x="12.9" y="446.82" font-size="12.9" text-anchor="middle" fill="#333333" font-family="Liberation Sans">10</text>
<text x="12.9" y="466.92" font-size="12.9" text-anchor="middle" fill="#333333" font-family="Liberation Sans">11</text>
<text x="12.9" y="487.02" font-size="12.9" text-anchor="middle" fill="#333333" font-family="Liberation Sans">12</text>
<text x="12.9" y="507.12" font-size="12.9" text-anchor="middle" fill="#333333" font-family="Liberation Sans">13</text>
<text x="12.9" y="527.22" font-size="12.9" text-anchor="middle" fill="#333333" font-family="Liberation Sans">14</text>
<text x="12.9" y="547.32" font-size="12.9" text-anchor="middle" fill="#333333" font-family="Liberation Sans">15</text>
<text x="12.9" y="567.42" font-size="12.9" text-anchor="middle" fill="#333333" font-family="Liberation Sans">16</text>
<path d="M11.4 207 L23.1 195.6 L23.1 207 Z" fill="#bdbdbd" stroke="none" stroke-width="1" />
<text x="74.50" y="228.10" font-size="15.55" textLength="71.58" lengthAdjust="spacingAndGlyphs" fill="#3a3a3a" font-family="Liberation Sans" font-weight="bold" >Sản phẩm</text>
<text x="281.70" y="228.10" font-size="14.83" textLength="29.50" lengthAdjust="spacingAndGlyphs" fill="#3a3a3a" font-family="Liberation Sans" font-weight="bold" >Quý</text>
<text x="447.00" y="228.10" font-size="15.55" textLength="77.02" lengthAdjust="spacingAndGlyphs" fill="#3a3a3a" font-family="Liberation Sans" font-weight="bold" >Doanh thu</text>
<text x="70.50" y="252.88" font-size="15.99" textLength="79.48" lengthAdjust="spacingAndGlyphs" fill="#4f4f4f" font-family="Liberation Sans" stroke="#4f4f4f" stroke-width="0.3">Sản phẩm A</text>
<text x="286.00" y="252.88" font-size="15.70" textLength="17.39" lengthAdjust="spacingAndGlyphs" fill="#4f4f4f" font-family="Liberation Sans" stroke="#4f4f4f" stroke-width="0.3">Q1</text>
<text x="470.00" y="252.88" font-size="15.99" textLength="32.30" lengthAdjust="spacingAndGlyphs" fill="#4f4f4f" font-family="Liberation Sans" stroke="#4f4f4f" stroke-width="0.3">2000</text>
<text x="70.50" y="277.46" font-size="15.99" textLength="79.52" lengthAdjust="spacingAndGlyphs" fill="#4f4f4f" font-family="Liberation Sans" stroke="#4f4f4f" stroke-width="0.3">Sản phẩm B</text>
<text x="286.00" y="277.46" font-size="15.70" textLength="17.39" lengthAdjust="spacingAndGlyphs" fill="#4f4f4f" font-family="Liberation Sans" stroke="#4f4f4f" stroke-width="0.3">Q1</text>
<text x="470.00" y="277.46" font-size="15.99" textLength="32.30" lengthAdjust="spacingAndGlyphs" fill="#4f4f4f" font-family="Liberation Sans" stroke="#4f4f4f" stroke-width="0.3">1500</text>
<text x="70.50" y="302.04" font-size="15.99" textLength="79.48" lengthAdjust="spacingAndGlyphs" fill="#4f4f4f" font-family="Liberation Sans" stroke="#4f4f4f" stroke-width="0.3">Sản phẩm A</text>
<text x="286.00" y="302.04" font-size="15.70" textLength="17.39" lengthAdjust="spacingAndGlyphs" fill="#4f4f4f" font-family="Liberation Sans" stroke="#4f4f4f" stroke-width="0.3">Q2</text>
<text x="470.00" y="302.04" font-size="15.99" textLength="32.30" lengthAdjust="spacingAndGlyphs" fill="#4f4f4f" font-family="Liberation Sans" stroke="#4f4f4f" stroke-width="0.3">3000</text>
<text x="70.50" y="326.62" font-size="15.99" textLength="79.52" lengthAdjust="spacingAndGlyphs" fill="#4f4f4f" font-family="Liberation Sans" stroke="#4f4f4f" stroke-width="0.3">Sản phẩm B</text>
<text x="286.00" y="326.62" font-size="15.70" textLength="17.39" lengthAdjust="spacingAndGlyphs" fill="#4f4f4f" font-family="Liberation Sans" stroke="#4f4f4f" stroke-width="0.3">Q2</text>
<text x="470.00" y="326.62" font-size="15.99" textLength="32.30" lengthAdjust="spacingAndGlyphs" fill="#4f4f4f" font-family="Liberation Sans" stroke="#4f4f4f" stroke-width="0.3">2500</text>
<text x="70.50" y="351.20" font-size="15.99" textLength="79.48" lengthAdjust="spacingAndGlyphs" fill="#4f4f4f" font-family="Liberation Sans" stroke="#4f4f4f" stroke-width="0.3">Sản phẩm A</text>
<text x="286.00" y="351.20" font-size="15.70" textLength="17.39" lengthAdjust="spacingAndGlyphs" fill="#4f4f4f" font-family="Liberation Sans" stroke="#4f4f4f" stroke-width="0.3">Q3</text>
<text x="470.00" y="351.20" font-size="15.99" textLength="32.30" lengthAdjust="spacingAndGlyphs" fill="#4f4f4f" font-family="Liberation Sans" stroke="#4f4f4f" stroke-width="0.3">2500</text>
<text x="70.50" y="375.78" font-size="15.99" textLength="79.52" lengthAdjust="spacingAndGlyphs" fill="#4f4f4f" font-family="Liberation Sans" stroke="#4f4f4f" stroke-width="0.3">Sản phẩm B</text>
<text x="286.00" y="375.78" font-size="15.70" textLength="17.39" lengthAdjust="spacingAndGlyphs" fill="#4f4f4f" font-family="Liberation Sans" stroke="#4f4f4f" stroke-width="0.3">Q3</text>
<text x="470.00" y="375.78" font-size="15.99" textLength="32.30" lengthAdjust="spacingAndGlyphs" fill="#4f4f4f" font-family="Liberation Sans" stroke="#4f4f4f" stroke-width="0.3">2000</text>
<text x="70.50" y="400.36" font-size="15.99" textLength="79.48" lengthAdjust="spacingAndGlyphs" fill="#4f4f4f" font-family="Liberation Sans" stroke="#4f4f4f" stroke-width="0.3">Sản phẩm A</text>
<text x="286.00" y="400.36" font-size="15.70" textLength="17.39" lengthAdjust="spacingAndGlyphs" fill="#4f4f4f" font-family="Liberation Sans" stroke="#4f4f4f" stroke-width="0.3">Q4</text>
<text x="470.00" y="400.36" font-size="15.99" textLength="32.30" lengthAdjust="spacingAndGlyphs" fill="#4f4f4f" font-family="Liberation Sans" stroke="#4f4f4f" stroke-width="0.3">3500</text>
<text x="70.50" y="424.94" font-size="15.99" textLength="79.52" lengthAdjust="spacingAndGlyphs" fill="#4f4f4f" font-family="Liberation Sans" stroke="#4f4f4f" stroke-width="0.3">Sản phẩm B</text>
<text x="286.00" y="424.94" font-size="15.70" textLength="17.39" lengthAdjust="spacingAndGlyphs" fill="#4f4f4f" font-family="Liberation Sans" stroke="#4f4f4f" stroke-width="0.3">Q4</text>
<text x="470.00" y="424.94" font-size="15.99" textLength="32.30" lengthAdjust="spacingAndGlyphs" fill="#4f4f4f" font-family="Liberation Sans" stroke="#4f4f4f" stroke-width="0.3">3000</text>
<text x="576.40" y="254.80" font-size="13.52" textLength="324.41" lengthAdjust="spacingAndGlyphs" fill="#262626" font-family="Liberation Sans" >=SUMIFS(C2:C9, A2:A9, &quot;Sản phẩm A&quot;, B2:B9, &quot;Q2&quot;)</text>
<path d="M393.2 189.2 A4.3 4.3 0 0 1 401.8 189.8 L395.8 210.8 A4.2 4.2 0 0 1 403.6 215.4 A4.1 4.1 0 0 1 410.4 220 A4.4 4.4 0 0 1 417.6 227 L417.6 238 C417.6 249.5 406 256.4 393 256.4 C379 256.4 369.6 247 369.6 236 L370.4 208.6 A4.7 4.7 0 0 1 379.8 208.4 L379.1 227.6 Z" fill="#f4352a" stroke="#ffd0c8" stroke-width="0.9" stroke-linejoin="round"/>
</svg>
</body></html>
